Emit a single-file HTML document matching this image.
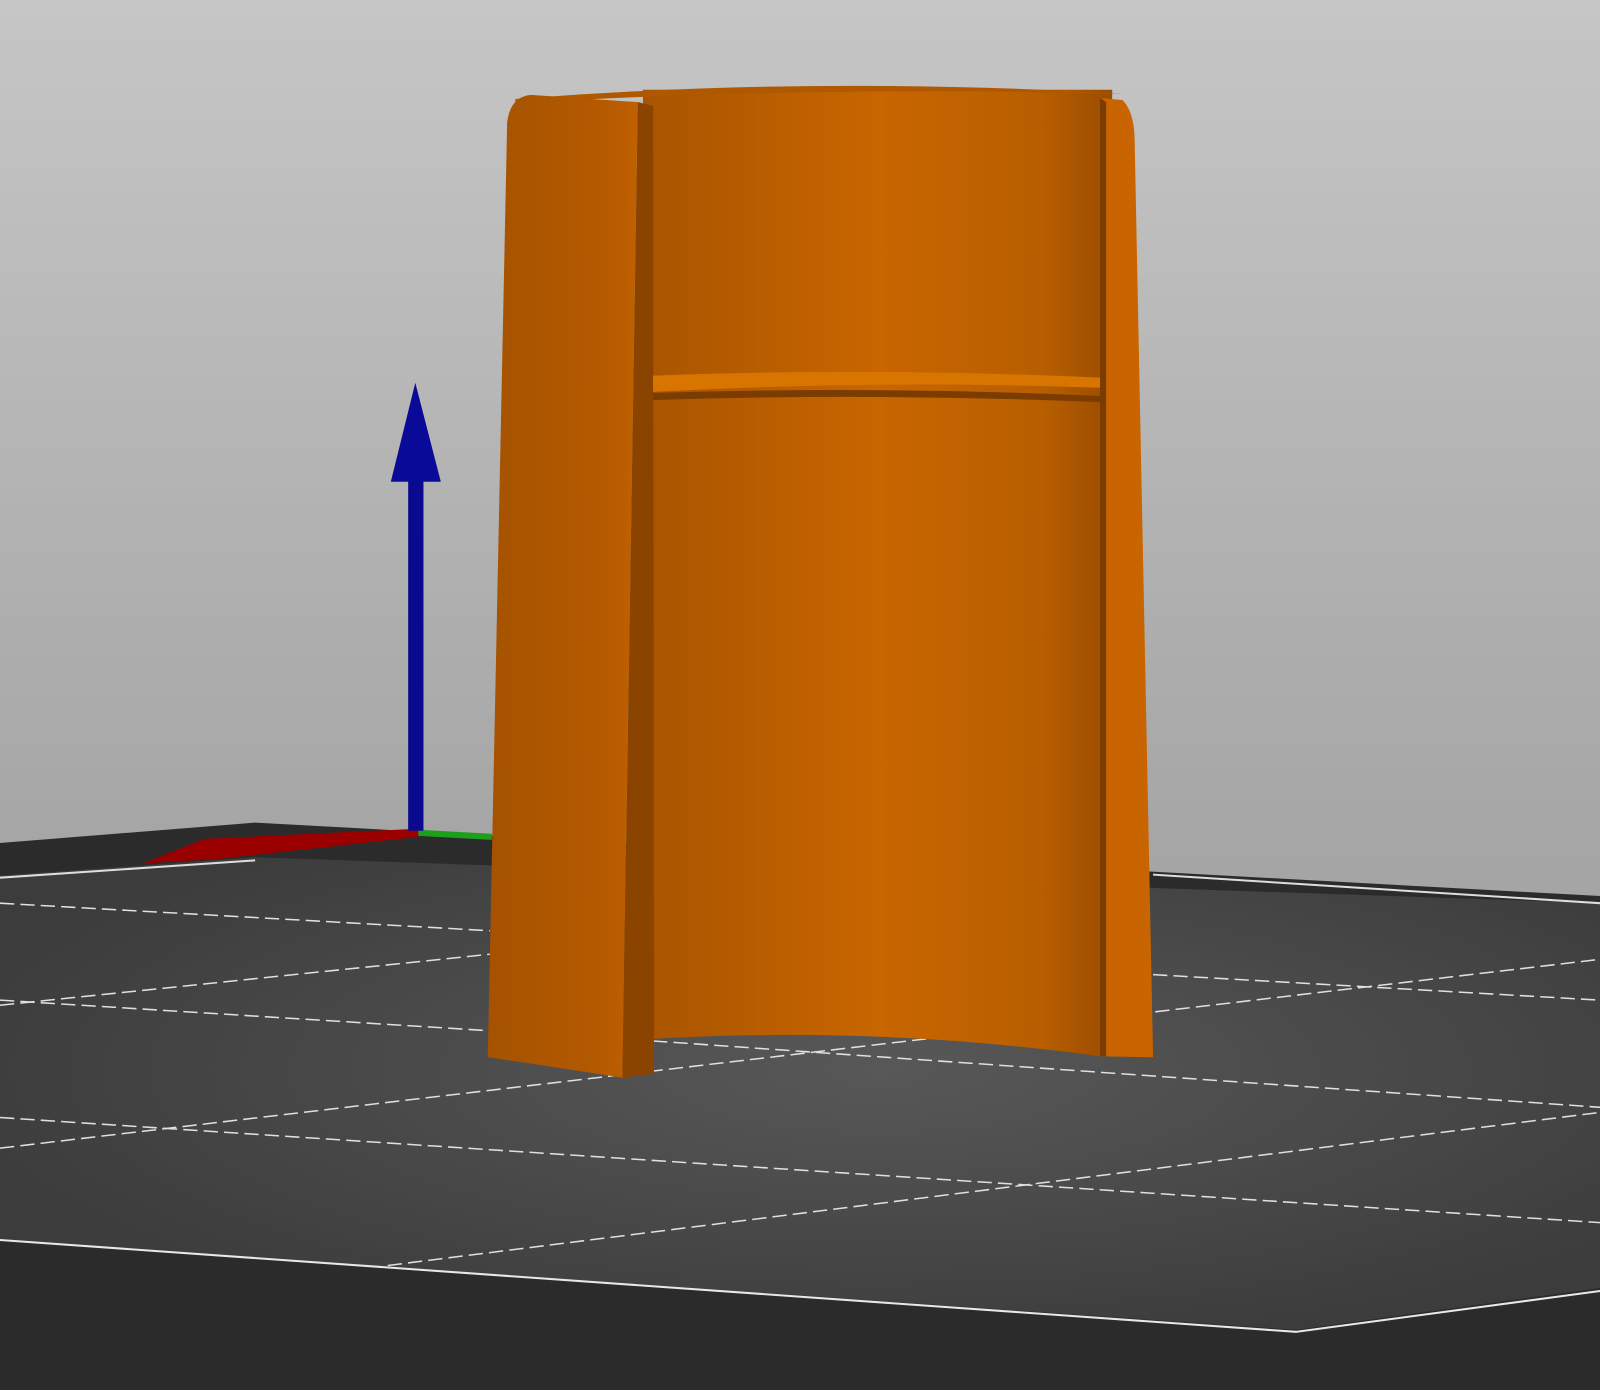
<!DOCTYPE html>
<html><head><meta charset="utf-8"><style>html,body{margin:0;padding:0;width:1600px;height:1390px;overflow:hidden;background:#bbb}</style></head>
<body>
<svg width="1600" height="1390" viewBox="0 0 1568 1362" preserveAspectRatio="none" xmlns="http://www.w3.org/2000/svg">
<defs>
<linearGradient id="bg" x1="0" y1="0" x2="0" y2="1">
<stop offset="0" stop-color="#c6c6c6"/><stop offset="0.6" stop-color="#a6a6a6"/><stop offset="1" stop-color="#9a9a9a"/>
</linearGradient>
<radialGradient id="bed" cx="0.55" cy="0.45" r="0.6">
<stop offset="0" stop-color="#585858"/><stop offset="1" stop-color="#3c3c3c"/>
</radialGradient>
<linearGradient id="body" x1="0" y1="0" x2="1" y2="0">
<stop offset="0" stop-color="#a85400"/><stop offset="0.5" stop-color="#c86600"/><stop offset="0.85" stop-color="#b85e00"/><stop offset="1" stop-color="#9a4c00"/>
</linearGradient>
<linearGradient id="lf" x1="0" y1="0" x2="1" y2="0">
<stop offset="0" stop-color="#a55200"/><stop offset="0.7" stop-color="#b35900"/><stop offset="1" stop-color="#c06000"/>
</linearGradient>
</defs>
<rect width="1568" height="1362" fill="url(#bg)"/>
<polygon points="0,826 250,806 1568,878 1568,1362 0,1362" fill="#2b2b2b"/>
<polygon points="0,858 250,840 1568,885 1568,1262 1270,1303 0,1215" fill="url(#bed)"/>
<polyline points="0,1215 1270,1305 1568,1265" fill="none" stroke="#e8e8e8" stroke-width="2"/>
<polyline points="0,860 250,843" fill="none" stroke="#ddd" stroke-width="2"/>
<polyline points="1130,857 1568,885" fill="none" stroke="#ddd" stroke-width="2"/>
<g stroke="#e0e0e0" stroke-width="1.5" stroke-dasharray="14,6" fill="none">
<line x1="0" y1="885" x2="480" y2="912"/>
<line x1="0" y1="985" x2="480" y2="935"/>
<line x1="0" y1="980" x2="480" y2="1010"/>
<line x1="0" y1="1095" x2="1568" y2="1198"/>
<line x1="0" y1="1125" x2="1568" y2="940"/>
<line x1="380" y1="1240" x2="1568" y2="1090"/>
<line x1="640" y1="1020" x2="1568" y2="1085"/>
<line x1="1130" y1="955" x2="1568" y2="980"/>
</g>
<polygon points="140,846 200,822 410,812 410,820 210,842" fill="#9a0000"/>
<line x1="410" y1="816" x2="482" y2="820" stroke="#1ca01c" stroke-width="6"/>
<rect x="400" y="470" width="15" height="344" fill="#0a0a90"/>
<polygon points="407,375 432,472 383,472" fill="#0a0a98"/>
<path d="M630,88 L1090,88 L1078,1035 Q860,1005 640,1018 Z" fill="url(#body)"/>
<path d="M505,97 Q800,74 1100,92 Q800,84 505,101 Z" fill="#b05800"/>
<path d="M497,120 Q500,95 520,93 L625,100 L610,1056 Q540,1045 478,1036 Z" fill="url(#lf)"/>
<path d="M625,100 L640,104 L641,1052 L610,1056 Z" fill="#8a4400"/>
<path d="M1078,96 L1100,98 Q1112,110 1112,140 L1130,1036 L1078,1035 Z" fill="#c96500"/>
<path d="M1078,96 L1084,100 L1084,1035 L1078,1035 Z" fill="#7a3c00"/>
<path d="M640,368 Q860,360 1078,370 L1078,380 Q860,372 640,384 Z" fill="#d87400"/>
<path d="M640,385 Q860,378 1078,388 L1078,394 Q860,385 640,392 Z" fill="#7a3c00"/>
</svg>
</body></html>
